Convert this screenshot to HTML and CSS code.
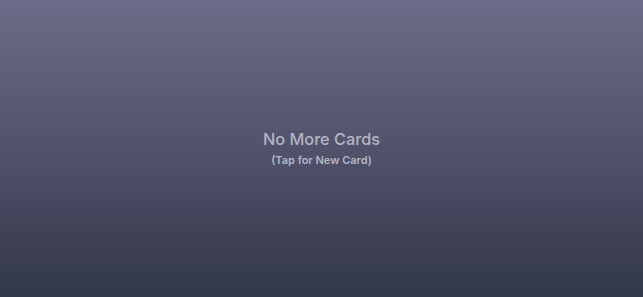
FILE: index.html
```html
<!DOCTYPE html>
<html>
<head>
<meta charset="utf-8">
<link rel="stylesheet" href="styles.css">
</head>
<body>
<main class="screen">
  <div class="empty">
    <div class="title">No More Cards</div>
    <div class="subtitle">(Tap for New Card)</div>
  </div>
</main>
</body>
</html>
```
FILE: styles.css
```css
html, body {
  margin: 0;
  padding: 0;
  height: 100%;
}
.screen {
  height: 297px;
  width: 100%;
  background: linear-gradient(to bottom, #6c6c88 0%, #50536a 50%, #33374a 100%);
  display: flex;
  align-items: center;
  justify-content: center;
  font-family: Inter, "Open Sans", sans-serif;
}
.empty {
  display: flex;
  flex-direction: column;
  align-items: center;
  margin-bottom: 2px;
}
.title {
  font-size: 16.3px;
  font-weight: 500;
  color: #b3b5c4;
  line-height: 20px;
}
.subtitle {
  font-size: 11px;
  font-weight: 600;
  color: #b3b5c4;
  line-height: 14px;
  margin-top: 4px;
}
```
